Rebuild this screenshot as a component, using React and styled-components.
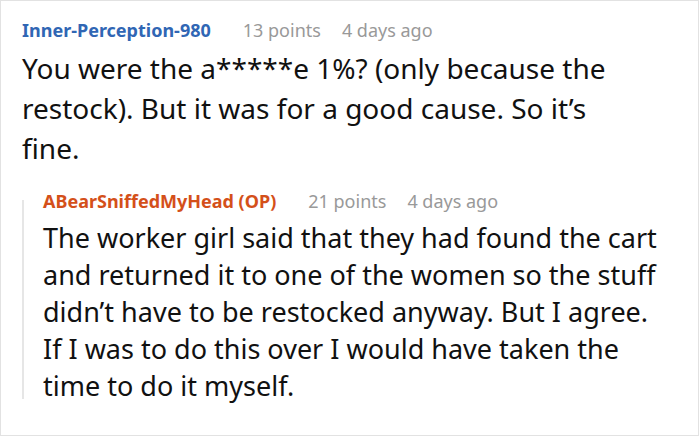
import styled, { createGlobalStyle } from "styled-components";

const GlobalStyle = createGlobalStyle`
  html, body {
    margin: 0;
    padding: 0;
    background: #fff;
  }
  body {
    font-family: "Noto Sans", "Open Sans", sans-serif;
  }
`;

const Frame = styled.div`
  box-sizing: border-box;
  width: 699px;
  height: 436px;
  border: 1px solid #e2e2e2;
  padding: 17px 0 0 21px;
  overflow: hidden;
`;

const Comment = styled.div`
  display: flex;
  flex-direction: column;
`;

const Meta = styled.div`
  display: flex;
  align-items: baseline;
  font-size: 18px;
  line-height: 24px;
`;

const Author = styled.span`
  font-weight: 700;
  color: ${(p) => (p.$op ? "#d4501a" : "#3066b4")};
  margin-right: 32px;
`;

const Points = styled.span`
  color: #999;
  margin-right: 21px;
`;

const Age = styled.span`
  color: #999;
`;

const Body = styled.p`
  margin: 6px 0 0;
  max-width: ${(p) => p.$max || "none"};
  color: #111;
  font-size: ${(p) => p.$size || "27px"};
  line-height: ${(p) => p.$lh || "37px"};
`;

const Reply = styled.div`
  position: relative;
  margin-top: 21px;
  padding-left: 21px;

  &::before {
    content: "";
    position: absolute;
    left: 0;
    top: 11px;
    bottom: 5px;
    width: 2px;
    background: #e6e6e6;
  }
`;

const comments = {
  parent: {
    author: "Inner-Perception-980",
    points: "13 points",
    age: "4 days ago",
    text: "You were the a*****e 1%? (only because the restock). But it was for a good cause. So it’s fine.",
  },
  reply: {
    author: "ABearSniffedMyHead (OP)",
    points: "21 points",
    age: "4 days ago",
    text: "The worker girl said that they had found the cart and returned it to one of the women so the stuff didn’t have to be restocked anyway. But I agree. If I was to do this over I would have taken the time to do it myself.",
  },
};

export default function App() {
  const { parent, reply } = comments;
  return (
    <>
      <GlobalStyle />
      <Frame>
        <Comment>
          <Meta>
            <Author>{parent.author}</Author>
            <Points>{parent.points}</Points>
            <Age>{parent.age}</Age>
          </Meta>
          <Body $size="28px" $lh="40px" $max="620px">
            {parent.text}
          </Body>
        </Comment>
        <Reply>
          <Comment>
            <Meta>
              <Author $op>{reply.author}</Author>
              <Points>{reply.points}</Points>
              <Age>{reply.age}</Age>
            </Meta>
            <Body $max="615px">{reply.text}</Body>
          </Comment>
        </Reply>
      </Frame>
    </>
  );
}
